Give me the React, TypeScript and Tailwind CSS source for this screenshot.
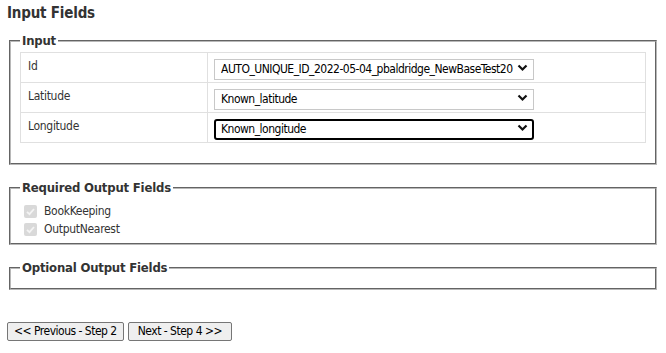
import React from "react";

function Chevron() {
    return (
        <svg width="11" height="8" viewBox="0 0 11 8" className="absolute right-[6px] top-1/2 -translate-y-1/2 pointer-events-none">
            <path d="M1.5 1.5 L5.5 5.5 L9.5 1.5" fill="none" stroke="#111" strokeWidth="2.2" />
        </svg>
    );
}

function Select({ value, focused }: { value: string; focused?: boolean }) {
    return (
        <div className="relative w-[320px]">
            <select
                defaultValue={value}
                className={
                    focused
                        ? "appearance-none w-full h-[21px] pl-[5px] pr-[16px] text-[12px] tracking-[-0.5px] leading-[17px] bg-white text-black border-2 border-black rounded-[3px] outline-none"
                        : "appearance-none w-full h-[21px] pl-[6px] pr-[16px] text-[12px] tracking-[-0.5px] leading-[19px] bg-white text-black border border-[#c8c8c8] outline-none"
                }
            >
                <option>{value}</option>
            </select>
            <Chevron />
        </div>
    );
}

function CheckRow({ label }: { label: string }) {
    return (
        <label className="flex items-center gap-[7px] h-[18px]">
            <span className="w-[13px] h-[13px] rounded-[2px] bg-[#d9d9d9] flex items-center justify-center">
                <svg width="11" height="11" viewBox="0 0 11 11">
                    <path d="M2 5.8 L4.5 8.2 L9 3" fill="none" stroke="#f4f4f4" strokeWidth="1.8" />
                </svg>
            </span>
            <span className="text-[12px] tracking-[-0.3px] text-[#333]">{label}</span>
        </label>
    );
}

export default function App() {
    const rows = [
        { label: "Id", value: "AUTO_UNIQUE_ID_2022-05-04_pbaldridge_NewBaseTest20" },
        { label: "Latitude", value: "Known_latitude" },
        { label: "Longitude", value: "Known_longitude", focused: true },
    ];

    return (
        <div className="min-h-screen bg-white px-[7px] pt-[3px] font-['DejaVu_Sans_Condensed','DejaVu_Sans',sans-serif] tracking-[-0.2px] text-[#333]">
            <h2 className="text-[15px] font-bold leading-[20px]">Input Fields</h2>

            <fieldset className="mt-[10px] mx-[2px] border-2 [border-style:groove] border-[#b8b8b8] px-[9px] pb-[20px]">
                <legend className="px-[2px] text-[13px] font-bold leading-[16px]">Input</legend>
                <table className="mt-[3px] w-full border-collapse">
                    <tbody>
                        {rows.map((r) => (
                            <tr key={r.label} className="h-[30px]">
                                <td className="w-[187px] border border-[#e0e0e0] pl-[7px] pb-[3px] text-[12px] tracking-[-0.3px] text-[#333]">{r.label}</td>
                                <td className="border border-[#e0e0e0] pl-[6px]">
                                    <Select value={r.value} focused={r.focused} />
                                </td>
                            </tr>
                        ))}
                    </tbody>
                </table>
            </fieldset>

            <fieldset className="mt-[15px] mx-[2px] border-2 [border-style:groove] border-[#b8b8b8] px-[13px] pb-[5px]">
                <legend className="-ml-[4px] px-[2px] text-[13px] font-bold leading-[16px]">Required Output Fields</legend>
                <div className="pt-[6px]">
                    <CheckRow label="BookKeeping" />
                    <CheckRow label="OutputNearest" />
                </div>
            </fieldset>

            <fieldset className="mt-[15px] mx-[2px] border-2 [border-style:groove] border-[#b8b8b8] px-[9px] pb-[12px]">
                <legend className="px-[2px] text-[13px] font-bold leading-[16px]">Optional Output Fields</legend>
            </fieldset>

            <div className="mt-[32px] flex gap-[4px]">
                <button className="h-[19px] px-[6px] text-[12px] tracking-[-0.5px] leading-[17px] text-black bg-[#efefef] border border-[#767676] rounded-[2px]">
                    &lt;&lt; Previous - Step 2
                </button>
                <button className="h-[19px] px-[9px] text-[12px] tracking-[-0.5px] leading-[17px] text-black bg-[#efefef] border border-[#767676] rounded-[2px]">
                    Next - Step 4 &gt;&gt;
                </button>
            </div>
        </div>
    );
}
